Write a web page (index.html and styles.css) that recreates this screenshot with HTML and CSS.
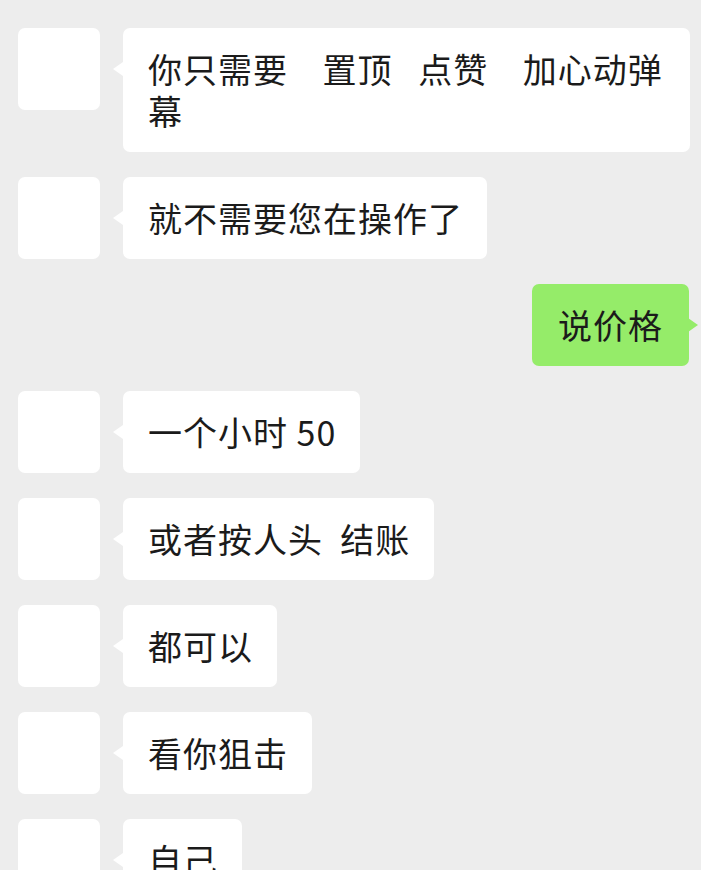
FILE: index.html
```html
<!DOCTYPE html>
<html lang="zh-CN">
<head>
<meta charset="utf-8">
<title>聊天</title>
<link rel="stylesheet" href="styles.css">
</head>
<body>
<div class="chat">
  <div class="row left">
    <div class="avatar"></div>
    <div class="bubble">你只需要    置顶   点赞    加心动弹幕</div>
  </div>
  <div class="row left">
    <div class="avatar"></div>
    <div class="bubble">就不需要您在操作了</div>
  </div>
  <div class="row right">
    <div class="bubble green">说价格</div>
  </div>
  <div class="row left">
    <div class="avatar"></div>
    <div class="bubble">一个小时 50</div>
  </div>
  <div class="row left">
    <div class="avatar"></div>
    <div class="bubble">或者按人头  结账</div>
  </div>
  <div class="row left">
    <div class="avatar"></div>
    <div class="bubble">都可以</div>
  </div>
  <div class="row left">
    <div class="avatar"></div>
    <div class="bubble">看你狙击</div>
  </div>
  <div class="row left">
    <div class="avatar"></div>
    <div class="bubble">自己</div>
  </div>
</div>
</body>
</html>
```

FILE: styles.css
```css
html, body {
  margin: 0;
  padding: 0;
  background: #ededed;
  overflow: hidden;
}

.chat {
  display: flex;
  flex-direction: column;
  gap: 25px;
  padding: 28px 0 0 0;
  font-family: "Noto Sans CJK SC", "Noto Sans", sans-serif;
  color: #1b1b1b;
}

.row {
  display: flex;
  align-items: flex-start;
}

.row.left {
  padding-left: 18px;
  gap: 23px;
}

.row.right {
  justify-content: flex-end;
  padding-right: 12px;
}

.avatar {
  flex: none;
  width: 82px;
  height: 82px;
  background: #ffffff;
  border-radius: 7px;
}

.bubble {
  position: relative;
  box-sizing: border-box;
  min-height: 82px;
  max-width: 567px;
  padding: 20px 24px 20px 25px;
  background: #ffffff;
  border-radius: 7px;
  font-size: 34px;
  line-height: 42px;
  letter-spacing: 1px;
  white-space: pre-wrap;
  word-break: break-all;
}

.bubble::before {
  content: "";
  position: absolute;
  top: 34px;
  left: -10px;
  border-style: solid;
  border-width: 7px 10px 7px 0;
  border-color: transparent #ffffff transparent transparent;
}

.bubble.green {
  background: #95ec69;
  padding: 20px 26px 20px 26px;
}

.bubble.green::before {
  left: auto;
  right: -9px;
  border-width: 7px 0 7px 10px;
  border-color: transparent transparent transparent #95ec69;
}
```
